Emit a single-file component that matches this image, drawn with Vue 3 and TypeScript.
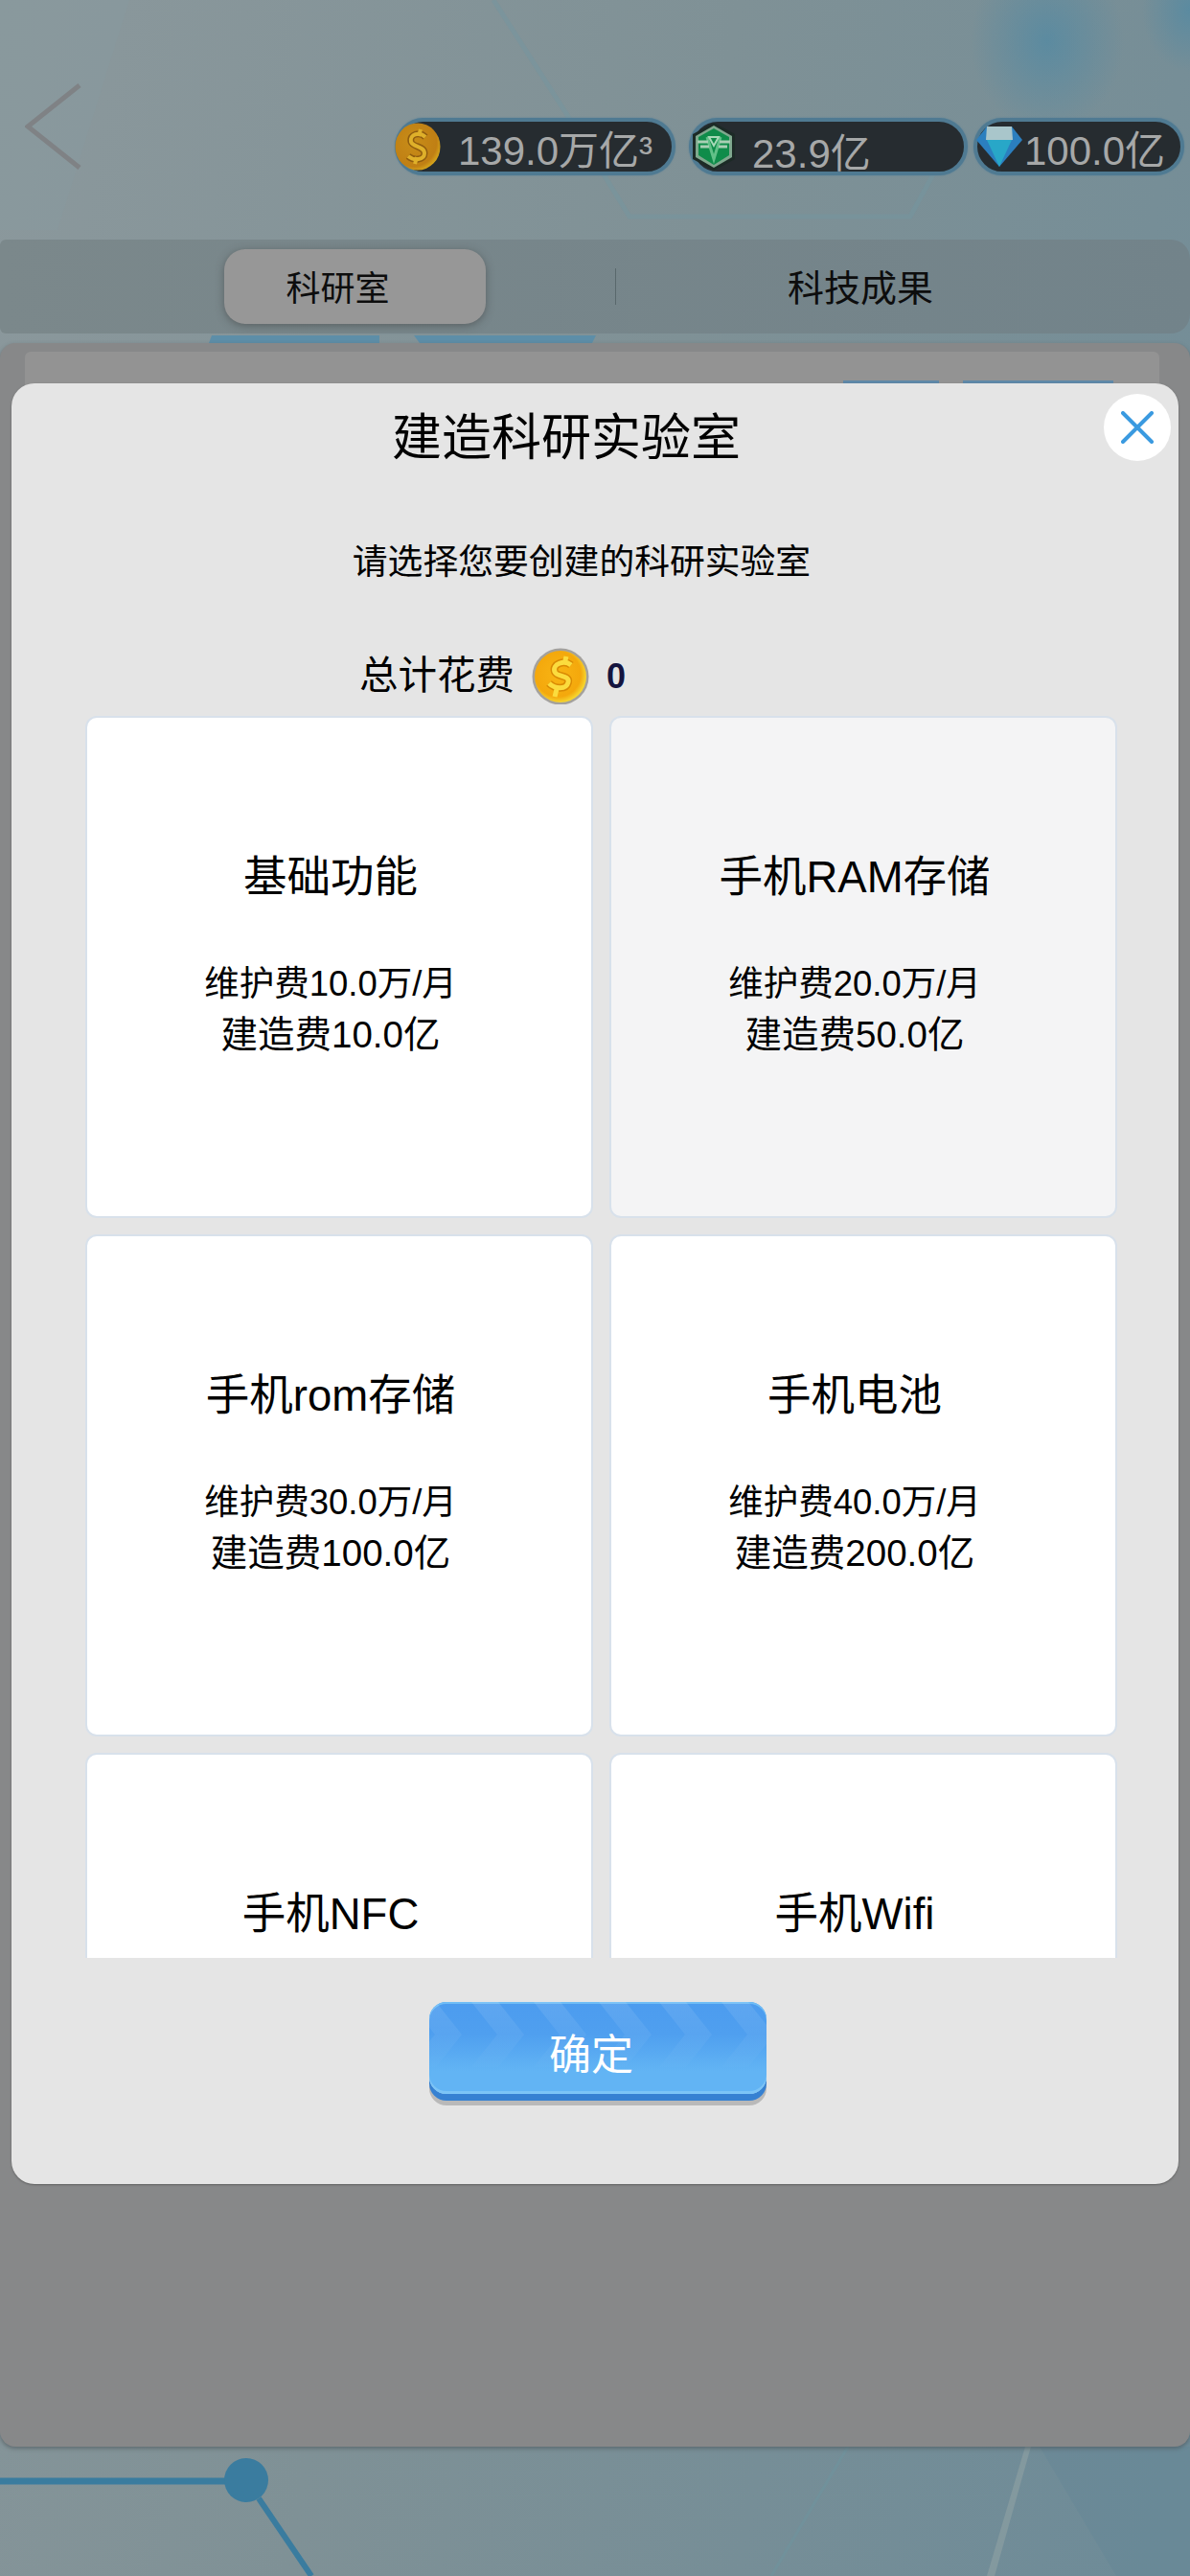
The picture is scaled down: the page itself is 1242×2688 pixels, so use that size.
<script setup lang="ts">
import { ref } from 'vue'

interface Lab {
  name: string
  upkeep?: string
  cost?: string
}

const labs: Lab[] = [
  { name: '基础功能', upkeep: '维护费10.0万/月', cost: '建造费10.0亿' },
  { name: '手机RAM存储', upkeep: '维护费20.0万/月', cost: '建造费50.0亿' },
  { name: '手机rom存储', upkeep: '维护费30.0万/月', cost: '建造费100.0亿' },
  { name: '手机电池', upkeep: '维护费40.0万/月', cost: '建造费200.0亿' },
  { name: '手机NFC' },
  { name: '手机Wifi' }
]

const selected = ref(1)
const chevrons = [-21, 44, 109, 177, 240, 305]
</script>

<template>
  <div class="page">
    <svg class="backdrop" width="1242" height="2688" viewBox="0 0 1242 2688">
      <defs>
        <radialGradient id="blob" cx="0.5" cy="0.5" r="0.5">
          <stop offset="0" stop-color="#4f89a4" stop-opacity="0.7" />
          <stop offset="1" stop-color="#4f89a4" stop-opacity="0" />
        </radialGradient>
      </defs>
      <ellipse cx="1093" cy="43" rx="80" ry="95" fill="url(#blob)" />
      <ellipse cx="1242" cy="10" rx="50" ry="65" fill="url(#blob)" />
      <polygon points="0,0 135,0 60,240 0,240" fill="#879a9f" opacity="0.4" />
      <path d="M515 0 L592 120 L657 226 L950 226 L975 180" fill="none" stroke="#74959f" stroke-width="5" opacity="0.5" />
      <line x1="0" y1="2589" x2="240" y2="2589" stroke="#3a7c9f" stroke-width="7" />
      <line x1="270" y1="2607" x2="325" y2="2688" stroke="#3a7c9f" stroke-width="6" />
      <circle cx="257" cy="2588" r="23" fill="#3a7c9f" />
      <polygon points="1070,2553 1076,2553 1038,2688 1030,2688" fill="#95a5a5" opacity="0.5" />
      <polygon points="1085,2553 1242,2553 1242,2688 1165,2688" fill="#5f8595" opacity="0.3" />
      <line x1="885" y1="2553" x2="805" y2="2688" stroke="#6e959f" stroke-width="3" opacity="0.5" />
    </svg>

    <header class="topbar">
      <svg class="back" width="60" height="90" viewBox="0 0 60 90">
        <path d="M57 2 L3 45 L57 88" fill="none" stroke="#7f8285" stroke-width="5" />
      </svg>
      <div class="wallet">
        <div class="pill pill-gold">
          <svg class="pill-icon" width="48" height="50" viewBox="0 0 48 50">
            <defs>
              <radialGradient id="goldA" cx="0.4" cy="0.4" r="0.65">
                <stop offset="0" stop-color="#c78d18" />
                <stop offset="0.8" stop-color="#c07f14" />
                <stop offset="1" stop-color="#d9ab1c" />
              </radialGradient>
            </defs>
            <ellipse cx="24" cy="25" rx="23.5" ry="24.5" fill="url(#goldA)" />
            <path d="M32 15 C26 9 15 12 17 20 C19 26 31 24 31 32 C31 39 20 40 14 35" fill="none" stroke="#8f5c10" stroke-width="7" />
            <path d="M27 7 L25 14 M23 36 L21 43" fill="none" stroke="#dfb02a" stroke-width="4" />
            <path d="M32 15 C26 9 15 12 17 20 C19 26 31 24 31 32 C31 39 20 40 14 35" fill="none" stroke="#dfb02a" stroke-width="4" />
          </svg>
          <span class="pill-text">139.0万亿³</span>
        </div>
        <div class="pill pill-green">
          <svg class="pill-icon" width="46" height="50" viewBox="0 0 46 50">
            <polygon points="23,0 45,12 45,38 23,50 1,38 1,12" fill="#1c2a26" />
            <polygon points="23,3 42,14 42,36 23,47 4,36 4,14" fill="#7fa88e" />
            <polygon points="23,6 39,15 39,34 23,44 7,34 7,15" fill="#0f8c4a" />
            <path d="M16 15 L23 38 L30 15" fill="none" stroke="#62c088" stroke-width="3" />
            <path d="M18 15 L23 24 L28 15 Z" fill="none" stroke="#a8d9b8" stroke-width="2" />
            <path d="M6 20 H17 M40 20 H29 M9 25 H18 M37 25 H28" fill="none" stroke="#a8cfb4" stroke-width="3" />
          </svg>
          <span class="pill-text pill-text-low">23.9亿</span>
        </div>
        <div class="pill pill-diamond">
          <svg class="pill-icon" width="48" height="42" viewBox="0 0 48 42">
            <polygon points="11,0 37,0 48,14 24,42 0,14" fill="#2b7fbf" />
            <polygon points="11,0 37,0 38,14 10,14" fill="#a9c6cb" />
            <polygon points="24,42 11,14 37,14" fill="#28a7c8" />
          </svg>
          <span class="pill-text">100.0亿</span>
        </div>
      </div>
    </header>

    <nav class="tabs">
      <div class="tab-side">
        <div class="tab tab-active"><span>科研室</span></div>
      </div>
      <i class="tab-divider"></i>
      <div class="tab-side tab-right">
        <div class="tab">科技成果</div>
      </div>
    </nav>

    <div class="strip">
      <i class="strip-a"></i>
      <i class="strip-b"></i>
    </div>

    <section class="panel">
      <div class="panel-inner">
        <div class="inner-bits">
          <i class="bit-a"></i>
          <i class="bit-b"></i>
        </div>
      </div>
    </section>

    <div class="modal">
      <button class="close" type="button" aria-label="关闭">
        <svg width="34" height="34" viewBox="0 0 34 34">
          <path d="M2 2 L32 32 M32 2 L2 32" stroke="#3a9ae0" stroke-width="4" stroke-linecap="round" />
        </svg>
      </button>
      <h1 class="title">建造科研实验室</h1>
      <p class="subtitle">请选择您要创建的科研实验室</p>
      <div class="total">
        <span class="total-label">总计花费</span>
        <svg class="coin" width="60" height="60" viewBox="0 0 60 60">
          <defs>
            <radialGradient id="goldB" cx="0.45" cy="0.45" r="0.55">
              <stop offset="0" stop-color="#f8b414" />
              <stop offset="0.8" stop-color="#f4a80c" />
              <stop offset="1" stop-color="#f6d52e" />
            </radialGradient>
          </defs>
          <circle cx="30" cy="31" r="29.5" fill="#6f6a60" opacity="0.55" />
          <circle cx="30" cy="31" r="27" fill="url(#goldB)" />
          <path d="M41 19 C34 13 21 18 24 26 C26 32 40 29 38 37 C36 45 24 44 18 38" fill="none" stroke="#d98a04" stroke-width="8" />
          <path d="M36 10 L34 18 M26 44 L24 52" fill="none" stroke="#fbdc3e" stroke-width="5" />
          <path d="M41 19 C34 13 21 18 24 26 C26 32 40 29 38 37 C36 45 24 44 18 38" fill="none" stroke="#fbdc3e" stroke-width="5" />
        </svg>
        <span class="total-value">0</span>
      </div>

      <div class="lab-scroll">
        <div class="lab-grid">
          <div
            v-for="(lab, i) in labs"
            :key="lab.name"
            :class="['lab', { 'lab-selected': i === selected }]"
          >
            <div class="lab-name">{{ lab.name }}</div>
            <div v-if="lab.upkeep" class="lab-meta">{{ lab.upkeep }}</div>
            <div v-if="lab.cost" class="lab-meta lab-cost">{{ lab.cost }}</div>
          </div>
        </div>
      </div>

      <div class="actions">
        <button class="confirm" type="button">
          <svg class="confirm-art" width="352" height="96" viewBox="0 0 352 96">
            <defs>
              <linearGradient id="band" x1="0" y1="0" x2="0" y2="1">
                <stop offset="0" stop-color="#ffffff" stop-opacity="0.1" />
                <stop offset="1" stop-color="#ffffff" stop-opacity="0.01" />
              </linearGradient>
            </defs>
            <polygon
              v-for="x in chevrons"
              :key="x"
              :points="`${x},0 ${x + 28},0 ${x + 55},34 ${x + 28},68 ${x},68 ${x + 27},34`"
              fill="url(#band)"
            />
          </svg>
          <span class="confirm-label">确定</span>
        </button>
      </div>
    </div>
  </div>
</template>

<style scoped>
.page {
  position: relative;
  width: 1242px;
  height: 2688px;
  overflow: hidden;
  display: flex;
  flex-direction: column;
  font-family: "Liberation Sans", "Noto Sans CJK SC", sans-serif;
  color: #000;
  background: linear-gradient(100deg, #8b989c 0%, #7f9196 45%, #6d8b98 100%);
}

.backdrop {
  position: absolute;
  left: 0;
  top: 0;
}

.topbar {
  position: relative;
  height: 250px;
  flex: none;
  display: flex;
  box-sizing: border-box;
  padding: 87px 6px 0 26px;
}

.back {
  flex: none;
}

.wallet {
  display: flex;
  margin-left: auto;
  margin-top: 36px;
  height: 60px;
}

.pill {
  display: flex;
  align-items: center;
  box-sizing: border-box;
  height: 60px;
  border-radius: 30px;
  background: #262c30;
  border: 4px solid #4f7a92;
  box-shadow: 0 0 2px #5b8298;
  color: #a6a8a8;
  font-size: 42px;
  white-space: nowrap;
}

.pill-gold {
  width: 293px;
}

.pill-green {
  width: 291px;
  margin-left: 14px;
}

.pill-diamond {
  width: 220px;
  margin-left: 6px;
}

.pill-icon {
  flex: none;
}

.pill-gold .pill-icon {
  margin-left: -4px;
}

.pill-gold .pill-text {
  margin-left: 18px;
}

.pill-green .pill-icon {
  margin-left: -1px;
}

.pill-green .pill-text {
  margin-left: 17px;
}

.pill-diamond .pill-icon {
  margin-left: -1px;
}

.pill-diamond .pill-text {
  margin-left: 2px;
}

.pill-text-low {
  margin-top: 6px;
}

.tabs {
  position: relative;
  height: 98px;
  flex: none;
  display: flex;
  align-items: center;
  background: linear-gradient(90deg, #7b888b, #72838a);
  border-radius: 6px 20px 20px 6px;
}

.tab-side {
  flex: 0 0 642px;
  display: flex;
  padding-left: 234px;
  box-sizing: border-box;
}

.tab-right {
  flex: 1;
  padding-left: 179px;
}

.tab {
  height: 78px;
  display: flex;
  align-items: center;
  justify-content: center;
  padding-bottom: 3px;
  box-sizing: border-box;
  font-size: 38px;
  color: #0d0d0d;
}

.tab-active {
  width: 273px;
  padding-right: 36px;
  background: #979797;
  border-radius: 22px;
  box-shadow: 0 2px 8px rgba(60, 60, 60, 0.5);
  font-size: 36px;
}

.tab-divider {
  flex: none;
  width: 1px;
  height: 38px;
  background: #59686c;
}

.strip {
  position: relative;
  height: 10px;
  flex: none;
}

.strip i {
  position: absolute;
  top: 2px;
  height: 8px;
  background: #5d8ea8;
}

.strip-a {
  left: 218px;
  width: 178px;
  clip-path: polygon(3px 0, 100% 0, 100% 100%, 0 100%);
}

.strip-b {
  left: 432px;
  width: 190px;
  clip-path: polygon(0 0, 100% 0, calc(100% - 4px) 100%, 6px 100%);
}

.panel {
  position: relative;
  flex: none;
  height: 2195px;
  padding: 9px 32px 0 26px;
  box-sizing: border-box;
  background: #878889;
  border-radius: 16px;
  box-shadow: 0 2px 4px rgba(70, 80, 85, 0.6);
}

.panel-inner {
  height: 60px;
  background: #939393;
  border-radius: 6px 6px 0 0;
}

.inner-bits {
  position: relative;
  height: 100%;
}

.inner-bits i {
  position: absolute;
  top: 30px;
  height: 3px;
  background: #5f88a8;
}

.bit-a {
  left: 854px;
  width: 100px;
}

.bit-b {
  left: 979px;
  width: 157px;
}

.modal {
  position: absolute;
  left: 12px;
  top: 400px;
  width: 1218px;
  height: 1879px;
  background: #e5e5e5;
  border-radius: 24px;
  box-shadow: 0 1px 2px rgba(60, 60, 60, 0.5);
  display: flex;
  flex-direction: column;
}

.close {
  position: absolute;
  right: 8px;
  top: 11px;
  width: 70px;
  height: 70px;
  padding: 0;
  border: 0;
  border-radius: 50%;
  background: #fff;
  display: flex;
  align-items: center;
  justify-content: center;
}

.title {
  margin: 0;
  height: 114px;
  line-height: 114px;
  padding-right: 60px;
  text-align: center;
  font-size: 52px;
  font-weight: 400;
}

.subtitle {
  margin: 43px 0 0;
  height: 60px;
  line-height: 60px;
  padding-right: 28px;
  text-align: center;
  font-size: 36.8px;
}

.total {
  margin-top: 57px;
  height: 62px;
  display: flex;
  align-items: center;
  padding-left: 363px;
}

.total-label {
  font-size: 40.5px;
  line-height: 1;
}

.coin {
  margin-left: 18px;
}

.total-value {
  margin-left: 18px;
  margin-top: 2px;
  font-size: 36px;
  font-weight: 700;
  color: #14143f;
}

.lab-scroll {
  margin-top: 11px;
  height: 1296px;
  overflow: hidden;
  padding-left: 77px;
}

.lab-grid {
  display: grid;
  grid-template-columns: 530px 530px;
  grid-auto-rows: 524px;
  gap: 17px;
}

.lab {
  box-sizing: border-box;
  padding: 135px 18px 0 0;
  background: #fff;
  border: 2.5px solid #d8e1eb;
  border-radius: 12px;
  text-align: center;
}

.lab-selected {
  background: #f4f4f5;
}

.lab-name {
  height: 64px;
  line-height: 64px;
  margin-bottom: 52px;
  font-size: 45.5px;
}

.lab-meta {
  height: 53px;
  line-height: 53px;
  font-size: 36.5px;
}

.lab-cost {
  font-size: 38.5px;
}

.actions {
  margin-top: 46px;
  padding-left: 436px;
}

.confirm {
  position: relative;
  width: 352px;
  height: 96px;
  padding: 0 14px 0 0;
  border: 0;
  border-radius: 18px;
  background: linear-gradient(#4c9cef 0%, #4f9fef 35%, #62b4f4 75%, #62b4f4 100%);
  box-shadow:
    inset 0 2px 0 #6fbdf6,
    inset 0 -3px 0 #7cc4f6,
    0 7px 0 #3681d2,
    0 12px 0 #b9b9b9;
  color: #fff;
  font-family: inherit;
  font-size: 44px;
  overflow: visible;
}

.confirm-art {
  position: absolute;
  left: 0;
  top: 0;
  border-radius: 18px;
}

.confirm-label {
  position: relative;
  top: 4px;
}
</style>

<style>
html,
body {
  margin: 0;
  background: #7f9196;
}
</style>
